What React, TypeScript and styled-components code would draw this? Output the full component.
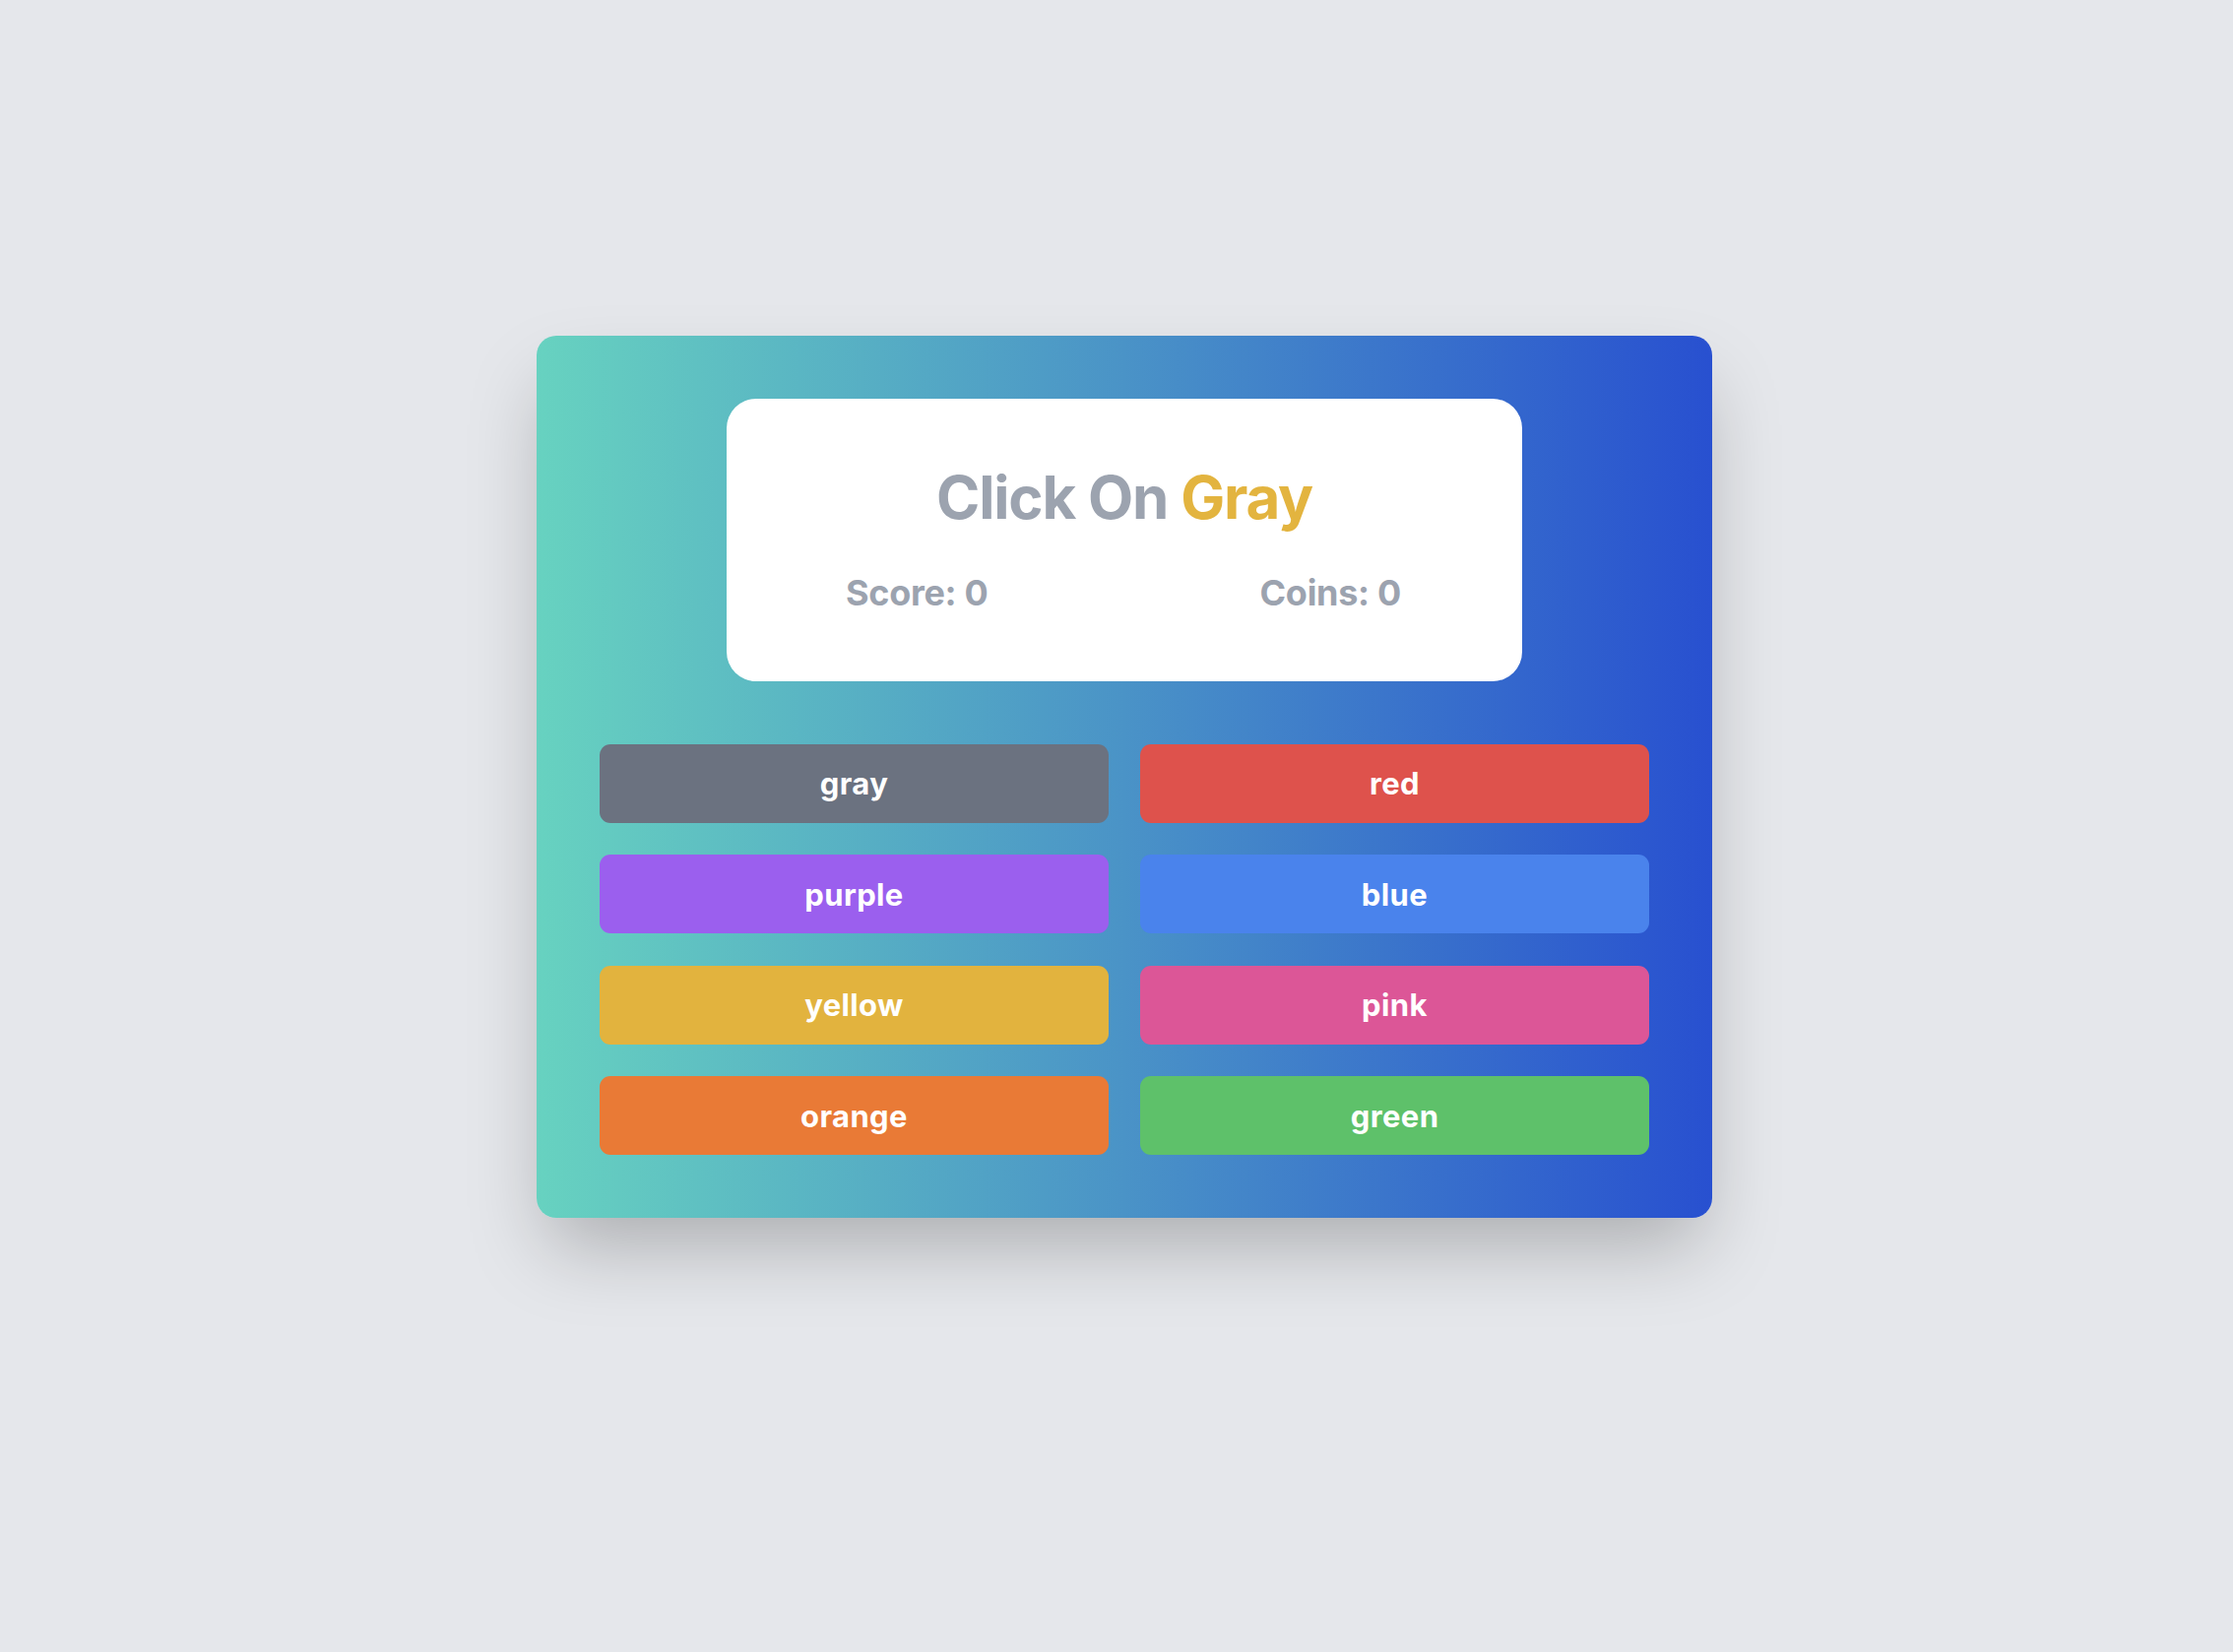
import React from "react";
import styled, { createGlobalStyle } from "styled-components";

const GlobalStyle = createGlobalStyle`
  html, body {
    margin: 0;
    padding: 0;
    background: #e5e7eb;
    font-family: Inter, "Noto Sans", "Liberation Sans", sans-serif;
  }
  * { box-sizing: border-box; }
`;

const Page = styled.main`
  min-height: 100vh;
  display: flex;
  align-items: center;
  justify-content: center;
  padding: 0 0 100px 16px;
`;

const Card = styled.section`
  width: 1194px;
  padding: 64px;
  border-radius: 20px;
  background: linear-gradient(90deg, #67d2c0 0%, #4a93c7 50%, #2850d0 100%);
  box-shadow: 0 40px 80px -12px rgba(0, 0, 0, 0.25);
  display: flex;
  flex-direction: column;
  gap: 64px;
`;

const Panel = styled.div`
  width: 808px;
  margin: 0 auto;
  background: #ffffff;
  border-radius: 30px;
  padding: 64px 0 63px;
  display: flex;
  flex-direction: column;
`;

const Title = styled.h1`
  margin: 0;
  text-align: center;
  font-size: 60px;
  line-height: 72px;
  font-weight: 700;
  color: #9ca3af;
  letter-spacing: -1.2px;
`;

const Highlight = styled.span`
  color: #e3b43f;
`;

const Stats = styled.div`
  margin-top: 34px;
  padding: 0 123px 0 121px;
  display: flex;
  justify-content: space-between;
`;

const Stat = styled.span`
  font-size: 36px;
  line-height: 54px;
  font-weight: 700;
  color: #9ca3af;
  letter-spacing: -0.3px;
`;

const Grid = styled.div`
  display: grid;
  grid-template-columns: 1fr 1fr;
  column-gap: 32px;
  row-gap: 32.5px;
`;

const ColorButton = styled.button<{ $bg: string }>`
  height: 80px;
  border: none;
  border-radius: 11px;
  background: ${(p) => p.$bg};
  color: #ffffff;
  font-family: Inter, "Noto Sans", "Liberation Sans", sans-serif;
  font-size: 31px;
  font-weight: 700;
  letter-spacing: 0.4px;
  cursor: pointer;
  padding: 0;
`;

const colors: { name: string; bg: string }[] = [
  { name: "gray", bg: "#6b7280" },
  { name: "red", bg: "#de524c" },
  { name: "purple", bg: "#9b5fee" },
  { name: "blue", bg: "#4a83ec" },
  { name: "yellow", bg: "#e2b33e" },
  { name: "pink", bg: "#dc5697" },
  { name: "orange", bg: "#e97a36" },
  { name: "green", bg: "#5ec16a" },
];

export default function App() {
  return (
    <>
      <GlobalStyle />
      <Page>
        <Card>
          <Panel>
            <Title>
              Click On <Highlight>Gray</Highlight>
            </Title>
            <Stats>
              <Stat>Score: 0</Stat>
              <Stat>Coins: 0</Stat>
            </Stats>
          </Panel>
          <Grid>
            {colors.map((c) => (
              <ColorButton key={c.name} $bg={c.bg}>
                {c.name}
              </ColorButton>
            ))}
          </Grid>
        </Card>
      </Page>
    </>
  );
}
